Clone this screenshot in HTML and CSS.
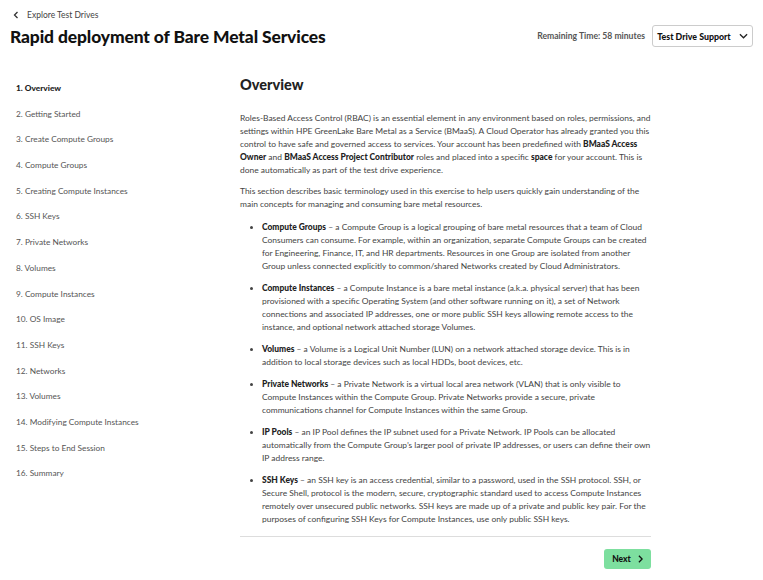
FILE: index.html
```html
<!DOCTYPE html>
<html lang="en">
<head>
<meta charset="utf-8">
<title>Rapid deployment of Bare Metal Services</title>
<link rel="stylesheet" href="styles.css">
</head>
<body>
<header class="top">
  <a class="back" href="#"><svg class="back-ico" viewBox="0 0 8 8" width="8" height="8"><path d="M5.5 1 L2.5 4 L5.5 7" fill="none" stroke="#333" stroke-width="1.3"/></svg>Explore Test Drives</a>
  <div class="title-row">
    <h1>Rapid deployment of Bare Metal Services</h1>
    <div class="actions">
      <span class="remaining">Remaining Time: 58 minutes</span>
      <button class="support">Test Drive Support <svg viewBox="0 0 10 6" width="9" height="6"><path d="M1 1 L5 5 L9 1" fill="none" stroke="#222" stroke-width="1.4"/></svg></button>
    </div>
  </div>
</header>
<div class="layout">
  <nav class="steps">
    <a class="step active">1. Overview</a>
    <a class="step">2. Getting Started</a>
    <a class="step">3. Create Compute Groups</a>
    <a class="step">4. Compute Groups</a>
    <a class="step">5. Creating Compute Instances</a>
    <a class="step">6. SSH Keys</a>
    <a class="step">7. Private Networks</a>
    <a class="step">8. Volumes</a>
    <a class="step">9. Compute Instances</a>
    <a class="step">10. OS Image</a>
    <a class="step">11. SSH Keys</a>
    <a class="step">12. Networks</a>
    <a class="step">13. Volumes</a>
    <a class="step">14. Modifying Compute Instances</a>
    <a class="step">15. Steps to End Session</a>
    <a class="step">16. Summary</a>
  </nav>
  <main class="content">
    <h2>Overview</h2>
    <p>Roles-Based Access Control (RBAC) is an essential element in any environment based on roles, permissions, and settings within HPE GreenLake Bare Metal as a Service (BMaaS). A Cloud Operator has already granted you this control to have safe and governed access to services. Your account has been predefined with <b>BMaaS Access Owner</b> and <b>BMaaS Access Project Contributor</b> roles and placed into a specific <b>space</b> for your account. This is done automatically as part of the test drive experience.</p>
    <p>This section describes basic terminology used in this exercise to help users quickly gain understanding of the main concepts for managing and consuming bare metal resources.</p>
    <ul class="terms">
      <li><b>Compute Groups</b> – a Compute Group is a logical grouping of bare metal resources that a team of Cloud Consumers can consume. For example, within an organization, separate Compute Groups can be created for Engineering, Finance, IT, and HR departments. Resources in one Group are isolated from another Group unless connected explicitly to common/shared Networks created by Cloud Administrators.</li>
      <li><b>Compute Instances</b> – a Compute Instance is a bare metal instance (a.k.a. physical server) that has been provisioned with a specific Operating System (and other software running on it), a set of Network connections and associated IP addresses, one or more public SSH keys allowing remote access to the instance, and optional network attached storage Volumes.</li>
      <li><b>Volumes</b> – a Volume is a Logical Unit Number (LUN) on a network attached storage device. This is in addition to local storage devices such as local HDDs, boot devices, etc.</li>
      <li><b>Private Networks</b> – a Private Network is a virtual local area network (VLAN) that is only visible to Compute Instances within the Compute Group. Private Networks provide a secure, private communications channel for Compute Instances within the same Group.</li>
      <li><b>IP Pools</b> – an IP Pool defines the IP subnet used for a Private Network. IP Pools can be allocated automatically from the Compute Group’s larger pool of private IP addresses, or users can define their own IP address range.</li>
      <li><b>SSH Keys</b> – an SSH key is an access credential, similar to a password, used in the SSH protocol. SSH, or Secure Shell, protocol is the modern, secure, cryptographic standard used to access Compute Instances remotely over unsecured public networks. SSH keys are made up of a private and public key pair. For the purposes of configuring SSH Keys for Compute Instances, use only public SSH keys.</li>
    </ul>
    <div class="footer">
      <button class="next">Next <svg viewBox="0 0 6 10" width="5" height="8"><path d="M1 1 L5 5 L1 9" fill="none" stroke="#111" stroke-width="1.6"/></svg></button>
    </div>
  </main>
</div>
</body>
</html>
```
FILE: styles.css
```css
* { box-sizing: border-box; }
body {
  margin: 0;
  font-family: Lato, "Liberation Sans", sans-serif;
  color: #333;
  background: #fff;
}
.top { padding: 9px 10px 0 10px; }
.back {
  display: flex;
  align-items: center;
  gap: 7px;
  font-size: 8.5px;
  color: #444;
  text-decoration: none;
  padding-left: 2px;
  height: 12px;
}
.title-row {
  display: flex;
  justify-content: space-between;
  align-items: center;
  margin-top: 4px;
}
h1 {
  margin: 0;
  font-size: 17.4px;
  font-weight: 900;
  color: #111;
  letter-spacing: -0.1px;
}
.actions { display: flex; align-items: center; gap: 7px; }
.remaining { font-size: 8.6px; font-weight: 700; color: #555; }
.support {
  font-family: inherit;
  font-size: 8.8px;
  font-weight: 900;
  color: #111;
  background: #fff;
  border: 1px solid #ccc;
  border-radius: 3px;
  height: 22px;
  width: 101px;
  display: flex;
  align-items: center;
  justify-content: center;
  gap: 8px;
  padding: 0;
}
.layout {
  display: flex;
  padding-top: 35px;
}
.steps {
  width: 240px;
  padding-left: 16px;
  display: flex;
  flex-direction: column;
}
.step {
  font-size: 8.3px;
  color: #555;
  height: 25.7px;
  line-height: 12px;
}
.step.active { font-weight: 900; color: #222; }
.content { width: 414px; }
h2 {
  margin: 0;
  font-size: 14.5px;
  font-weight: 900;
  color: #222;
  line-height: 18px;
  margin-top: -6px;
}
p, li {
  font-size: 8.45px;
  line-height: 13px;
  color: #444;
}
p { margin: 0 0 8px 0; }
h2 + p { margin-top: 18px; }
b { font-weight: 900; color: #222; }
.terms { margin: 0; padding-left: 22px; }
.terms li { margin: 0; padding: 4.5px 0; }
.terms li:first-child { padding-top: 0; margin-top: 10px; }
.footer {
  border-top: 1px solid #ddd;
  margin-top: 5px;
  margin-right: 3px;
  padding-top: 12px;
  display: flex;
  justify-content: flex-end;
}
.next {
  font-family: inherit;
  font-size: 8.5px;
  font-weight: 900;
  color: #111;
  background: #7ddf9f;
  border: none;
  border-radius: 3px;
  width: 47px;
  height: 20px;
  display: flex;
  align-items: center;
  justify-content: center;
  gap: 7px;
}
```
